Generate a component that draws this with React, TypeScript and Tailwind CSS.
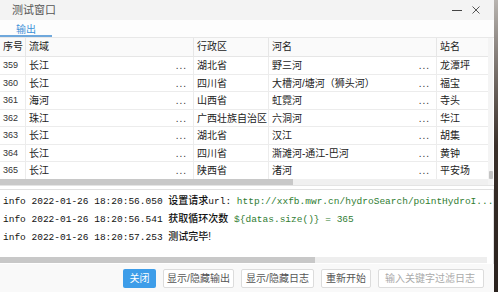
import React from "react";

const rows = [
  { no: "359", basin: "长江", region: "湖北省", river: "野三河", station: "龙潭坪" },
  { no: "360", basin: "长江", region: "四川省", river: "大槽河/塘河（狮头河）", station: "福宝" },
  { no: "361", basin: "海河", region: "山西省", river: "虹霓河", station: "寺头" },
  { no: "362", basin: "珠江", region: "广西壮族自治区", river: "六洞河", station: "华江" },
  { no: "363", basin: "长江", region: "湖北省", river: "汉江", station: "胡集" },
  { no: "364", basin: "长江", region: "四川省", river: "澌滩河-通江-巴河", station: "黄钟" },
  { no: "365", basin: "长江", region: "陕西省", river: "渚河", station: "平安场" },
];

const sans = "font-['Liberation_Sans','Noto_Sans_CJK_SC',sans-serif]";
const mono = "font-['Liberation_Mono','Noto_Sans_CJK_SC',monospace]";

const cols = "grid grid-cols-[26px_168px_75px_168px_52px]";

function Dots() {
  return <span className="ml-auto pr-[6px] tracking-[1px] text-[#333]">...</span>;
}

function Table() {
  return (
    <div className="flex h-[148px] border-b border-[#e4e4e4]">
      <div className="flex w-[488px] flex-col">
        <div className="flex-1 overflow-hidden">
          <div className={`${cols} h-[19px] items-center border-b border-[#e6e6e6] bg-[#fafafa] text-[10px] text-[#222]`}>
            <div className="border-r border-[#e6e6e6] pl-[3px] leading-[18px]">序号</div>
            <div className="border-r border-[#e6e6e6] pl-[3px] leading-[18px]">流域</div>
            <div className="border-r border-[#e6e6e6] pl-[3px] leading-[18px]">行政区</div>
            <div className="border-r border-[#e6e6e6] pl-[3px] leading-[18px]">河名</div>
            <div className="border-r border-[#e6e6e6] pl-[3px] leading-[18px]">站名</div>
          </div>
          {rows.map((r) => (
            <div
              key={r.no}
              className={`${cols} h-[17.5px] items-center border-b border-[#ececec] text-[10px] text-[#222]`}
            >
              <div className="h-full border-r border-[#ececec] pl-[3px] text-[9px] leading-[17px] text-[#333]">{r.no}</div>
              <div className="flex h-full items-center border-r border-[#ececec] pl-[3px]">
                <span>{r.basin}</span>
                <Dots />
              </div>
              <div className="h-full overflow-visible whitespace-nowrap border-r border-[#ececec] pl-[3px] leading-[17px]">
                {r.region}
              </div>
              <div className="flex h-full items-center border-r border-[#ececec] pl-[3px]">
                <span className="whitespace-nowrap">{r.river}</span>
                <Dots />
              </div>
              <div className="h-full border-r border-[#ececec] pl-[3px] leading-[17px]">{r.station}</div>
            </div>
          ))}
        </div>
        <div className="h-[6px] bg-[#f0f0f0]">
          <div className="h-full w-[293px] bg-[#c8c8c8]" />
        </div>
      </div>
      <div className="flex w-[5px] flex-col justify-end bg-[#f4f4f4] pb-[6px]">
        <div className="mx-auto h-[8px] w-[4px] rounded-[1px] bg-[#c4c4c4]" />
      </div>
    </div>
  );
}

function Log() {
  return (
    <div className="mt-[3px] flex h-[75px] flex-col border-r border-t border-[#e0e0e0] bg-white">
      <div className={`flex-1 overflow-hidden whitespace-nowrap pl-[3px] pt-[2px] text-[9.5px] leading-[17px] text-[#111] ${mono}`}>
        <div>
          info 2022-01-26 18:20:56.050{" "}
          <span className={`${sans} text-[10px] font-medium text-[#111]`}>设置请求</span>url:{" "}
          <span className="text-[#2f7d32]">http://xxfb.mwr.cn/hydroSearch/pointHydroI...</span>
        </div>
        <div>
          info 2022-01-26 18:20:56.541{" "}
          <span className={`${sans} text-[10px] font-medium text-[#111]`}>获取循环次数</span>{" "}
          <span className="text-[#2f7d32]">{"${datas.size()}"} = 365</span>
        </div>
        <div>
          info 2022-01-26 18:20:57.253{" "}
          <span className={`${sans} text-[10px] font-medium text-[#111]`}>测试完毕!</span>
        </div>
      </div>
      <div className="mb-[1px] h-[6px] w-[487px] bg-[#eeeeee]">
        <div className="h-full w-[315px] bg-[#c8c8c8]" />
      </div>
    </div>
  );
}

function Btn({ children, w }: { children: React.ReactNode; w: string }) {
  return (
    <button
      className={`h-[19px] ${w} rounded-[2px] border border-[#dcdcdc] bg-white text-[10px] text-[#555]`}
    >
      {children}
    </button>
  );
}

export default function App() {
  return (
    <div className={`flex h-[292px] w-[498px] overflow-hidden bg-white ${sans}`}>
      <div className="flex w-[494px] flex-col">
        <div className="flex h-[20px] items-center bg-[#f3f3f3] pl-[12px] pr-[14px]">
          <span className="text-[11px] text-[#555]">测试窗口</span>
          <span className="ml-auto h-[1px] w-[10px] bg-[#444]" />
          <svg className="ml-[10px]" width="8" height="8" viewBox="0 0 8 8">
            <path d="M0.5 0.5 L7.5 7.5 M7.5 0.5 L0.5 7.5" stroke="#555" strokeWidth="1" />
          </svg>
        </div>
        <div className="flex h-[18px] border-b border-[#e8e8e8] bg-[#fdfdfd]">
          <div className="h-[17px] w-[52px] border-b-2 border-[#6fa8dc] pl-[16px] pt-[5px] text-[10px] leading-[10px] text-[#3f92d8]">
            输出
          </div>
        </div>
        <Table />
        <Log />
        <div className="flex flex-1 items-center justify-end gap-[7px] bg-[#f9f9f9] pr-[10px]">
          <button className="h-[19px] w-[33px] rounded-[2px] bg-[#3d9de9] text-[10px] text-white">关闭</button>
          <Btn w="w-[71px]">显示/隐藏输出</Btn>
          <Btn w="w-[73px]">显示/隐藏日志</Btn>
          <Btn w="w-[50px]">重新开始</Btn>
          <div className="flex h-[19px] w-[106px] items-center rounded-[2px] border border-[#dcdcdc] bg-white pl-[6px] text-[10px] text-[#aaa]">
            输入关键字过滤日志
          </div>
        </div>
      </div>
      <div className="w-[4px] bg-gradient-to-b from-[#b8b4b0] via-[#3a302a] to-[#2a221e]" />
    </div>
  );
}
